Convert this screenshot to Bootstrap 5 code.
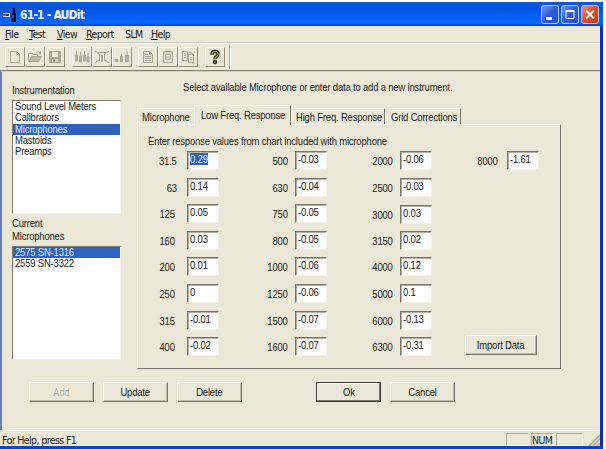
<!DOCTYPE html>
<html lang="en">
  <head>
    <meta charset="UTF-8" />
    <meta name="viewport" content="width=device-width, initial-scale=1" />
    <title>61-1 - AUDit</title>
    <link
      href="https://cdn.jsdelivr.net/npm/bootstrap@5.3.0/dist/css/bootstrap.min.css"
      rel="stylesheet"
    />
    <style>
      body {
        width: 606px;
        height: 449px;
        overflow: hidden;
        background: #fff;
        color: #1c1c1a;
        font: 11px/12px "Liberation Sans", Arial, sans-serif;
        letter-spacing: -0.2px;
        white-space: nowrap;
      }
      /* condensed dialog lettering */
      .slim {
        display: inline-block;
        transform: scaleX(0.86);
        transform-origin: 0 0;
      }
      .slim-center {
        transform-origin: 50% 0;
      }
      .slim-end {
        transform-origin: 100% 0;
      }
      .app-window {
        width: 603px;
        height: 447px;
        margin-top: 2px;
        background: #ebe8d7;
        border-right: 3px solid #0a2fc0;
        border-bottom: 3px solid #0b44c4;
      }
      .title-bar {
        height: 24px;
        width: 603px;
        padding: 1px 4px 0 2px;
        background: linear-gradient(#0a5ae0, #0551dc 25%, #0560f4 60%, #0466fb 88%, #0344c8);
        border-radius: 0 3px 0 0;
      }
      .title-text {
        font: bold 12px/24px "DejaVu Sans Condensed", "DejaVu Sans", sans-serif;
        letter-spacing: -0.8px;
        color: #fff;
        margin-left: 3px;
        padding-top: 1px;
      }
      .caption-group {
        gap: 2px;
      }
      .caption-btn {
        width: 18px;
        height: 19px;
        border: 1px solid #b9cdf5;
        border-radius: 3px;
        background: linear-gradient(135deg, #6f94f0, #2c5ade 50%, #2450cf);
      }
      .caption-close {
        background: linear-gradient(135deg, #ee9175, #dc4c28 50%, #c63a17);
      }
      .menu-bar {
        height: 17px;
        border-bottom: 1px solid #cbcac6;
        font: 10.5px/16px "DejaVu Sans Condensed", "DejaVu Sans", sans-serif;
        letter-spacing: -0.6px;
        padding-left: 5px;
      }
      .menu-file { width: 24px; }
      .menu-test { width: 28px; }
      .menu-view { width: 29px; }
      .menu-report { width: 39px; }
      .menu-slm { width: 26px; }
      .tool-bar {
        height: 28px;
        padding: 3px 0 0 5px;
        border-top: 1px solid #f6f5ec;
        border-bottom: 1px solid #858275;
      }
      .tool-group {
        margin-right: 6.5px;
      }
      .tool-btn {
        width: 20px;
        height: 20px;
        border: 1px solid;
        border-color: #fbfaf2 #8f8c7e #8f8c7e #fbfaf2;
      }
      .tool-btn svg {
        stroke: #aaa798;
        fill: none;
        stroke-width: 1;
      }
      .tool-sep {
        width: 2px;
        height: 24px;
        margin-top: -2px;
        border-left: 1px solid #a9a697;
        border-right: 1px solid #fff;
      }
      .client-area {
        height: 359px;
        border-left: 2px solid #6e7cb4;
        border-top: 1px solid #d5d2c2;
      }
      .side-pane {
        width: 109px;
        margin-left: 10px;
        padding-top: 12px;
      }
      .item-list {
        height: 114px;
        margin-top: 4px;
        background: #fefefe;
        border: 1px solid;
        border-color: #7d7b70 #f5f3e8 #f5f3e8 #7d7b70;
        line-height: 11.35px;
      }
      .item-list div {
        height: 11.35px;
        padding-left: 2px;
      }
      .item-list .chosen {
        background: #2f62bf;
        color: #dfe9fb;
      }
      .current-head {
        margin: 3px 0 -1px;
        line-height: 13px;
      }
      .work-pane {
        width: 424px;
        margin-left: 16px;
        padding-top: 9px;
      }
      .pane-hint {
        padding-left: 46px;
      }
      .tab-strip {
        height: 21px;
        margin-top: 10px;
      }
      .tab-item {
        height: 16px;
        border: 1px solid;
        border-color: #f8f7ed #77756a transparent #f8f7ed;
        border-bottom: 0;
        line-height: 16px;
        padding-left: 5px;
      }
      .tab-microphone { width: 57px; padding-left: 4px; border-right: 0; }
      .tab-low { width: 97px; padding-left: 6px; }
      .tab-high { width: 94px; padding-left: 4px; }
      .tab-grid { width: 76px; }
      .tab-active {
        height: 20px;
        margin-bottom: -1px;
        background: #ebe8d7;
        line-height: 18px;
      }
      .tab-page {
        height: 245px;
        border: 1px solid;
        border-color: #f8f7ed #77756a #77756a #f8f7ed;
        padding: 10px 0 0 10px;
      }
      .freq-col {
        width: 107px;
        flex-shrink: 0;
      }
      .freq-col:first-child {
        width: 108px;
      }
      .freq-col:nth-child(2) {
        width: 105px;
      }
      .freq-row {
        height: 18px;
        margin-bottom: 8.6px;
      }
      .freq-col:nth-child(3) .freq-row:nth-child(2) {
        margin-bottom: 9.6px;
      }
      .freq-col:nth-child(3) .freq-row:nth-child(3) {
        margin-bottom: 7.6px;
      }
      .freq-name {
        width: 32px;
        margin-right: 7px;
        text-align: right;
        padding-top: 4px;
      }
      .freq-col:first-child .freq-name {
        width: 27px;
        margin-right: 12px;
      }
      .freq-col:first-child .freq-row:nth-child(-n + 2) .freq-name {
        width: 29px;
        margin-right: 10px;
      }
      .freq-col:last-child .freq-name {
        width: 30px;
        margin-right: 9px;
      }
      .freq-value {
        width: 32px;
        height: 19px;
        background: #fefefe;
        border: 1px solid;
        border-color: #77756a #f5f3e8 #f5f3e8 #77756a;
        box-shadow: inset 1px 1px #b3b0a4;
        padding: 1px 0 0 2px;
      }
      .freq-value .picked {
        background: #2f62bf;
        color: #dfe9fb;
      }
      .import-row {
        height: 0;
        padding-left: 317px;
      }
      .push-btn {
        width: 65px;
        height: 20px;
        text-align: center;
        line-height: 18px;
        border: 1px solid;
        border-color: #fbfaf2 #7b796d #7b796d #fbfaf2;
        box-shadow: inset -1px -1px #bdbaab;
      }
      .btn-import {
        width: 72px;
        margin-top: -29px;
      }
      .push-btn.is-off {
        color: #b4b1a2;
        text-shadow: 1px 1px #fbfaf2;
      }
      .push-btn.is-default {
        border-color: #3c3b36;
        box-shadow: inset -1px -1px #7b796d, inset 1px 1px #fbfaf2;
      }
      .command-row {
        margin: 13px 0 0 27px;
        gap: 9px;
      }
      .command-row .is-default {
        margin-left: 65px;
      }
      .status-bar {
        height: 16px;
        border-top: 1px solid #f8f7ed;
        font: 10.5px/18px "DejaVu Sans Condensed", "DejaVu Sans", sans-serif;
        letter-spacing: -0.6px;
        padding-left: 2px;
      }
      .status-cell {
        width: 23px;
        height: 13px;
        margin: 2px 2px 0 0;
        border: 1px solid;
        border-color: #a9a697 #f5f3e8 #f5f3e8 #a9a697;
        line-height: 13px;
      }
      .status-cell-wide {
        width: 27px;
      }
    </style>
  </head>
  <body>
    <div class="app-window">
      <!-- Title bar -->
      <div class="title-bar d-flex align-items-center">
        <svg width="15" height="16" viewBox="0 0 15 16">
          <path d="M1 6h7v4H1z" fill="#d9dce6" />
          <path d="M1 7h3v2H1z" fill="#c2474a" />
          <path d="M4 7h3v2H4z" fill="#334" />
          <path d="M11 1h2v4l1 2v8H9.500V7l1.500-2z" fill="#0a0d18" />
          <path d="M10.500 8h1v3h-1z" fill="#6d7690" />
        </svg>
        <span class="title-text">61-1 - AUDit</span>
        <div class="caption-group d-flex ms-auto">
          <div class="caption-btn">
            <svg width="16" height="17" class="d-block"><path d="M4 11h6v3H4z" fill="#fff" /></svg>
          </div>
          <div class="caption-btn">
            <svg width="16" height="17" class="d-block">
              <path d="M4 5.500h8v7h-8z" fill="none" stroke="#fff" />
              <path d="M3.500 4h9v2h-9z" fill="#fff" />
            </svg>
          </div>
          <div class="caption-btn caption-close">
            <svg width="16" height="17" class="d-block">
              <path d="M4 4.500l8 8M12 4.500l-8 8" stroke="#fff" stroke-width="2" />
            </svg>
          </div>
        </div>
      </div>

      <!-- Menu -->
      <div class="menu-bar d-flex">
        <span class="menu-file"><u>F</u>ile</span>
        <span class="menu-test"><u>T</u>est</span>
        <span class="menu-view"><u>V</u>iew</span>
        <span class="menu-report"><u>R</u>eport</span>
        <span class="menu-slm">SLM</span>
        <span><u>H</u>elp</span>
      </div>

      <!-- Toolbar -->
      <div class="tool-bar d-flex">
        <div class="tool-group d-flex">
          <div class="tool-btn">
            <svg width="18" height="18" class="d-block"><path d="M4.500 3.500h6l3 3v8h-9zM10.500 3.500v3h3" /></svg>
          </div>
          <div class="tool-btn">
            <svg width="18" height="18" class="d-block">
              <path d="M2.500 13.500v-8h4l1 1h4v2" />
              <path d="M2.500 13.500l3-5h10l-3 5z" fill="#bdbaab" />
              <path d="M10.500 4.500q2-2 4 1M14.500 3v3h-3" />
            </svg>
          </div>
          <div class="tool-btn">
            <svg width="18" height="18" class="d-block">
              <path d="M3.500 3.500h11v11h-11z" fill="#aaa798" />
              <path d="M6 4h6v5H6z" fill="#ebe8d7" stroke="none" />
              <path d="M6 11h6v3H6z" fill="#d3d0c0" stroke="none" />
              <path d="M7 11h2v3H7z" fill="#9b988a" stroke="none" />
            </svg>
          </div>
        </div>
        <div class="tool-group d-flex">
          <div class="tool-btn">
            <svg width="18" height="18" class="d-block">
              <path d="M3.500 3v4M7.500 4v4M11.500 3v4M15 5v4" />
              <path d="M2.500 7h2v6h-2zM6.500 8h2v6h-2zM10.500 7h2v6h-2zM14 9h2v5h-2z" fill="#b3b0a1" />
            </svg>
          </div>
          <div class="tool-btn">
            <svg width="18" height="18" class="d-block">
              <path d="M2 3l4 3M16 3l-4 3M2 15l4-3M16 15l-4-3M5 4.500h8M6.500 6v7M11.500 6v7" />
              <path d="M8.500 7.500h1v6h-1z" fill="#b3b0a1" />
            </svg>
          </div>
          <div class="tool-btn">
            <svg width="18" height="18" class="d-block">
              <path d="M2 11.500h3v2H2zM7.500 8h2v5.500h-2zM12.500 7.500h3v6h-3z" fill="#b3b0a1" />
              <path d="M14 3v4M8.500 6v2" />
            </svg>
          </div>
        </div>
        <div class="tool-group d-flex">
          <div class="tool-btn">
            <svg width="18" height="18" class="d-block">
              <path d="M4.500 3.500h6l3 3v8h-9zM10.500 3.500v3h3M6 6.500h3M6 8.500h6M6 10.500h6M6 12.500h6" />
            </svg>
          </div>
          <div class="tool-btn">
            <svg width="18" height="18" class="d-block">
              <path d="M4.500 3.500h9v11h-9zM6.500 6.500h5v5h-5zM6.500 9h4" />
            </svg>
          </div>
          <div class="tool-btn">
            <svg width="18" height="18" class="d-block">
              <path d="M3.500 3.500h5v9h-5zM9.500 6.500h5v8h-5zM5 5.500h2M5 7.500h2M5 9.500h2M11 9.500h2M11 11.500h2M10 4.500h3v2" />
            </svg>
          </div>
        </div>
        <div class="tool-btn">
          <svg width="18" height="18" class="d-block">
            <path d="M6 7V6q0-2.500 3-2.500t3 2.500q0 1.500-1.500 2.500T9 11" style="stroke: #1c1b0c; stroke-width: 3.400" />
            <path d="M6 7V6q0-2.500 3-2.500t3 2.500q0 1.500-1.500 2.500T9 11" style="stroke: #b9b257; stroke-width: 1.200" />
            <circle cx="9" cy="14" r="1.800" style="fill: #77722e; stroke: #1c1b0c" />
          </svg>
        </div>
        <div class="tool-sep ms-1"></div>
      </div>

      <!-- Dialog -->
      <div class="client-area">
        <div class="d-flex">
          <div class="side-pane">
            <div><span class="slim">Instrumentation</span></div>
            <div class="item-list pt-0">
              <div class="mt-0"><span class="slim">Sound Level Meters</span></div>
              <div><span class="slim">Calibrators</span></div>
              <div class="chosen"><span class="slim">Microphones</span></div>
              <div><span class="slim">Mastoids</span></div>
              <div><span class="slim">Preamps</span></div>
            </div>
            <div class="current-head">
              <span class="slim">Current<br />Microphones</span>
            </div>
            <div class="item-list">
              <div class="chosen"><span class="slim">2575 SN-1316</span></div>
              <div><span class="slim">2559 SN-3322</span></div>
            </div>
          </div>

          <div class="work-pane">
            <div class="pane-hint">
              <span class="slim">Select available Microphone or enter data to add a new instrument.</span>
            </div>
            <div class="tab-strip d-flex align-items-end">
              <div class="tab-item tab-microphone"><span class="slim">Microphone</span></div>
              <div class="tab-item tab-active tab-low"><span class="slim">Low Freq. Response</span></div>
              <div class="tab-item tab-high"><span class="slim">High Freq. Response</span></div>
              <div class="tab-item tab-grid"><span class="slim">Grid Corrections</span></div>
            </div>
            <div class="tab-page">
              <div><span class="slim">Enter response values from chart included with microphone</span></div>
              <div class="d-flex mt-1" id="freqGrid"></div>
              <div class="import-row d-flex">
                <div class="push-btn btn-import"><span class="slim slim-center">Import Data</span></div>
              </div>
            </div>
          </div>
        </div>
        <div class="command-row d-flex">
          <div class="push-btn is-off"><span class="slim slim-center">Add</span></div>
          <div class="push-btn"><span class="slim slim-center">Update</span></div>
          <div class="push-btn"><span class="slim slim-center">Delete</span></div>
          <div class="push-btn is-default"><span class="slim slim-center">Ok</span></div>
          <div class="push-btn"><span class="slim slim-center">Cancel</span></div>
        </div>
      </div>

      <!-- Status bar -->
      <div class="status-bar d-flex">
        <span>For Help, press F1</span>
        <div class="status-cell ms-auto"></div>
        <div class="status-cell">NUM</div>
        <div class="status-cell status-cell-wide"></div>
        <svg width="15" height="15"><path d="M4 15L15 4M8 15l7-7M12 15l3-3" stroke="#a9a697" stroke-width="1.500" /></svg>
      </div>
    </div>

    <script>
      const columns = [
        [["31.5", "0.29"], ["63", "0.14"], ["125", "0.05"], ["160", "0.03"], ["200", "0.01"], ["250", "0"], ["315", "-0.01"], ["400", "-0.02"]],
        [["500", "-0.03"], ["630", "-0.04"], ["750", "-0.05"], ["800", "-0.05"], ["1000", "-0.06"], ["1250", "-0.06"], ["1500", "-0.07"], ["1600", "-0.07"]],
        [["2000", "-0.06"], ["2500", "-0.03"], ["3000", "0.03"], ["3150", "0.02"], ["4000", "0.12"], ["5000", "0.1"], ["6000", "-0.13"], ["6300", "-0.31"]],
        [["8000", "-1.61"]],
      ];

      document.getElementById("freqGrid").innerHTML = columns
        .map((rows) => {
          const cells = rows
            .map(
              ([name, value]) => `
              <div class="freq-row d-flex">
                <div class="freq-name d-flex justify-content-end"><span class="slim slim-end">${name}</span></div>
                <div class="freq-value"><span class="slim ${name === "31.5" ? "picked" : ""}">${value}</span></div>
              </div>`
            )
            .join("");
          return `<div class="freq-col">${cells}</div>`;
        })
        .join("");
    </script>
    <script src="https://cdn.jsdelivr.net/npm/bootstrap@5.3.0/dist/js/bootstrap.bundle.min.js"></script>
  </body>
</html>
